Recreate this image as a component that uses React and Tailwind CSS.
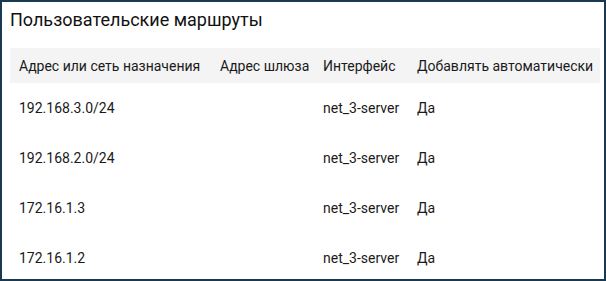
const routes = [
  { dest: '192.168.3.0/24', gateway: '', iface: 'net_3-server', auto: 'Да' },
  { dest: '192.168.2.0/24', gateway: '', iface: 'net_3-server', auto: 'Да' },
  { dest: '172.16.1.3', gateway: '', iface: 'net_3-server', auto: 'Да' },
  { dest: '172.16.1.2', gateway: '', iface: 'net_3-server', auto: 'Да' },
];

const App = () => {
  return (
    <div className="w-[606px] h-[281px] overflow-hidden bg-white border-2 border-[#173a52] font-['Roboto',sans-serif] text-[#1a1a1a]">
      <div className="pl-2 pr-1">
        <h2 className="h-[46px] pt-[6px] text-[18px] leading-[24px] font-normal text-[#111]">
          Пользовательские маршруты
        </h2>
        <table className="w-[590px] table-fixed border-collapse text-[14px] leading-[16px]">
          <colgroup>
            <col className="w-[201px]" />
            <col className="w-[103px]" />
            <col className="w-[94px]" />
            <col className="w-[192px]" />
          </colgroup>
          <thead>
            <tr className="h-[35px] bg-[#f4f4f4]">
              <th className="pl-[9px] pt-[1px] text-left font-normal whitespace-nowrap">Адрес или сеть назначения</th>
              <th className="pl-[9px] pt-[1px] text-left font-normal whitespace-nowrap">Адрес шлюза</th>
              <th className="pl-[9px] pt-[1px] text-left font-normal whitespace-nowrap">Интерфейс</th>
              <th className="pl-[9px] pt-[1px] text-left font-normal whitespace-nowrap">Добавлять автоматически</th>
            </tr>
          </thead>
          <tbody>
            {routes.map((r, i) => (
              <tr key={i} className="h-[50px]">
                <td className="pl-[9px] whitespace-nowrap">{r.dest}</td>
                <td className="pl-[9px] whitespace-nowrap">{r.gateway}</td>
                <td className="pl-[9px] whitespace-nowrap">{r.iface}</td>
                <td className="pl-[9px] whitespace-nowrap">{r.auto}</td>
              </tr>
            ))}
          </tbody>
        </table>
      </div>
    </div>
  );
};

export default App;
